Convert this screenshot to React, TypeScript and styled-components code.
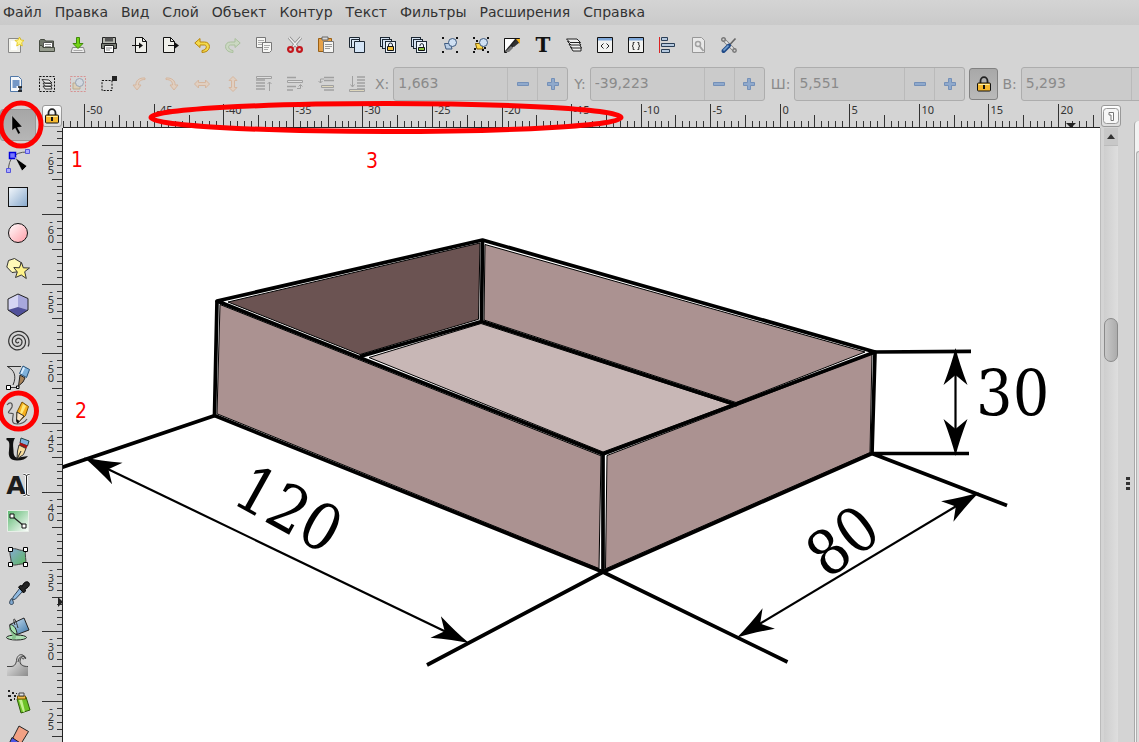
import React, { useLayoutEffect, useRef, useState } from "react";
import styled, { createGlobalStyle, css } from "styled-components";

const GlobalStyle = createGlobalStyle`
  * { box-sizing: border-box; }
  html, body, #root { height: 100%; }
  body {
    margin: 0;
    overflow: hidden;
    background: #d4d4d4;
    color: #333;
    font-family: "DejaVu Sans", sans-serif;
    font-size: 14px;
  }
  button, input { font: inherit; color: inherit; }
`;

const Window = styled.div`
  position: relative;
  display: flex;
  flex-direction: column;
  height: 100vh;
  overflow: hidden;
`;

const MenuBar = styled.nav`
  display: flex;
  flex: none;
  align-items: flex-start;
  gap: 13px;
  height: 25px;
  padding-left: 3px;
  background: linear-gradient(#d4d4d4, #cacaca);
`;

const MenuItem = styled.button`
  padding: 0;
  border: 0;
  background: none;
  line-height: 24px;
  white-space: nowrap;
`;

const Toolbar = styled.div<{ $height: number }>`
  display: flex;
  flex: none;
  align-items: center;
  height: ${(p) => p.$height}px;
  padding-left: 1px;
`;

const IconRow = styled.div`
  display: flex;
  flex: none;
  gap: 1px;
`;

const IconButton = styled.button<{ $faded?: boolean }>`
  display: grid;
  place-items: center;
  width: 30px;
  height: 32px;
  padding: 0;
  border: 0;
  background: none;
  opacity: ${(p) => (p.$faded ? 0.4 : 1)};
`;

const Field = styled.label`
  display: flex;
  flex: none;
  align-items: center;
  gap: 4px;
  margin-left: 6px;
  color: #8a8a8a;

  &:first-of-type { margin-left: 3px; }
  &:last-of-type { margin-left: 4px; }
`;

const SpinBox = styled.span<{ $width: number }>`
  display: flex;
  width: ${(p) => p.$width}px;
  height: 34px;
  border: 1px solid #adadad;
  border-radius: 3px;
  background: #cbcbcb;
  overflow: hidden;
`;

const SpinInput = styled.input`
  flex: 1;
  min-width: 0;
  padding: 0 4px 2px;
  border: 0;
  background: none;
  outline: none;
`;

const SpinButton = styled.button`
  display: grid;
  place-items: center;
  width: 30px;
  padding: 0;
  border: 0;
  border-left: 1px solid #bababa;
  background: none;
`;

const LockToggle = styled.button`
  display: grid;
  flex: none;
  place-items: center;
  width: 29px;
  height: 32px;
  margin-left: 4px;
  padding: 0;
  border: 1px solid #828282;
  border-radius: 3px;
  background: linear-gradient(#a8a8a8, #bababa);
`;

const Workspace = styled.main`
  display: flex;
  flex: 1;
  min-height: 0;
`;

const ToolBox = styled.div`
  display: flex;
  flex: none;
  flex-direction: column;
  width: 41px;
  padding-top: 4px;
  overflow: hidden;
`;

const ToolButton = styled.button<{ $active?: boolean }>`
  display: grid;
  flex: none;
  place-items: center;
  width: 36px;
  height: 36px;
  padding: 0;
  border: 0;
  background: none;

  ${(p) =>
    p.$active &&
    css`
      height: 32px;
      margin: 2px 0;
      border: 1px solid #999;
      border-radius: 3px;
      background: linear-gradient(#a6a6a6, #b6b6b6);
    `}
`;

const DrawingArea = styled.div`
  display: grid;
  flex: 1;
  grid-template-columns: 22px minmax(0, 1fr) 20px;
  grid-template-rows: 25px minmax(0, 1fr);
  min-width: 0;
`;

const CornerButton = styled.button`
  display: grid;
  place-items: center;
  width: 20px;
  height: 22px;
  margin: 2px 0 0 1px;
  padding: 0;
  border: 1px solid #999;
  border-radius: 3px;
  background: linear-gradient(#fff, #ddd);
`;

const RulerSvg = styled.svg`
  display: block;
  width: 100%;
  height: 100%;
  overflow: hidden;
  font-family: "Noto Sans", sans-serif;
  font-size: 11px;
  fill: #333;
`;

const Canvas = styled.svg`
  display: block;
  width: 100%;
  height: 100%;
  background: #fff;
`;

const ScrollColumn = styled.div`
  display: flex;
  flex-direction: column;
  padding-left: 3px;
  border-left: 1px solid #bbb;
`;

const ScrollArrow = styled.button`
  display: grid;
  flex: none;
  place-items: center;
  width: 14px;
  height: 18px;
  padding: 0;
  border: 0;
  border-bottom: 1px solid #bbb;
  background: #c8c8c8;
`;

const ScrollTrack = styled.div`
  flex: 1;
  width: 14px;
  padding-top: 172px;
  background: linear-gradient(90deg, #cecece, #dedede);
`;

const ScrollThumb = styled.div`
  height: 44px;
  border: 1px solid #8a8a8a;
  border-radius: 7px;
  background: linear-gradient(90deg, #c8c8c8, #acacac);
`;

const Splitter = styled.div`
  display: flex;
  flex: none;
  flex-direction: column;
  align-items: center;
  justify-content: center;
  gap: 2px;
  width: 14px;
  padding: 122px 0 0 2px;
`;

const GripDot = styled.span`
  width: 4px;
  height: 3px;
  background: #333;
`;

const DockPanel = styled.aside`
  flex: none;
  width: 5px;
  margin-top: 18px;
  padding: 30px 0 0 1px;
  border-left: 1px solid #a8a8a8;
  border-top-left-radius: 4px;
  background: #f2f2f2;
`;

const DockInner = styled.div`
  height: 100%;
  border-left: 1px solid #b0b0b0;
  border-top: 1px solid #b0b0b0;
  border-top-left-radius: 3px;
  background: #dcdcdc;
`;

const Annotations = styled.svg`
  position: absolute;
  inset: 0;
  width: 100%;
  height: 100%;
  pointer-events: none;
  font-family: "DejaVu Sans Condensed", "DejaVu Sans", sans-serif;
  font-size: 21px;
`;

/* ---------- icons, 16 unit grid ---------- */

const page = "M2.5.5h9l3 3v12h-12z";

const Lock = () => (
  <g>
    <path d="M4.5 7V5a3.5 3.8 0 0 1 7 0v2" fill="none" stroke="#222" strokeWidth="1.800" />
    <rect x="1.500" y="7" width="13" height="8" rx="1" fill="#f5b82e" stroke="#111" />
    <path d="M2.500 8.500h11" stroke="#fff0a0" />
    <path d="M8 9v4" stroke="#111" strokeWidth="2" />
  </g>
);

const Windows = ({ children }: { children?: React.ReactNode }) => (
  <g fill="#d5e3f2" stroke="#1c2733">
    <rect x=".5" y=".5" width="9" height="9" />
    <rect x="2.5" y="2.5" width="9" height="9" />
    <rect x="5.5" y="4.5" width="10" height="11" fill="#eef4fb" />
    {children}
  </g>
);

const Group = ({ lock }: { lock?: boolean }) => (
  <g>
    <path d="M2.500 6.500h6l1.500 5.500H4z" fill={lock ? "#ffd94a" : "#b9cde4"} stroke={lock ? "#7a5a00" : "#3d5a80"} />
    <circle cx="10.5" cy="5.5" r="4" fill="#cfe0f3" stroke="#3d5a80" />
    <path d="M0 0h2v2H0zM14 0h2v2h-2zM0 14h2v2H0zM14 14h2v2h-2z" fill="#111" />
    {lock && <path d="M3 3h2v2H3zM11 10h2v2h-2zM1 11h2v2H1zM9 12h2v2H9z" fill="#111" />}
  </g>
);

const commandIcons: [string, React.ReactNode, boolean?][] = [
  ["Создать", <g><path d="M.5 1.500h12v14h-12z" fill="#f2f2ec" stroke="#888" /><path d="M3 4h6v9H3z" fill="#fff" /><path d="M11.500 0l1.400 3 3.100.4-2.300 2.300.6 3.300-2.800-1.600-2.800 1.600.6-3.300L7 3.400l3.100-.4z" fill="#fff58a" stroke="#e0c010" strokeWidth=".8" /></g>],
  ["Открыть", <g><path d="M.5 3.500l1-1h4l1 1.500h8v10.500H.5z" fill="#70766a" stroke="#454a40" /><path d="M4.500 5.500h9v6h-9z" fill="#fff" stroke="#555" /><path d="M6 7.500h6M6 9.500h6" stroke="#999" /><path d="M.5 14.500V8.500H3l1 2h11.500v4z" fill="#969c8e" stroke="#454a40" /></g>],
  ["Сохранить", <g><path d="M2.500 10.500h11l1.500 5H1z" fill="#eee" stroke="#888" /><path d="M3.500 13.500h9" stroke="#aaa" /><path d="M6.500.5h3v6h3.500L8 11.500 3 6.500h3.500z" fill="#73d216" stroke="#3f8a08" /></g>],
  ["Печать", <g><path d="M1.500.5h13v7h-13z" fill="#b7bab2" stroke="#222" /><path d="M.5 6.500h15v5H.5z" fill="#787c74" stroke="#222" /><path d="M4 .5h8v4H4z" fill="#555" /><path d="M3.500 8.500h9v7h-9z" fill="#fff" stroke="#222" /><path d="M5 11h6M5 13h4" stroke="#888" /></g>],
  ["Импорт", <g><path d="M3.500.5h7l4 4v11h-11z" fill="#efefea" stroke="#111" /><path d="M10.500.5v4h4" fill="none" stroke="#111" /><path d="M0 8.500h8" stroke="#111" /><path d="M7 5.500l4 3-4 3z" fill="#111" /></g>],
  ["Экспорт", <g><path d="M.5.500h7l4 4v11H.5z" fill="#efefea" stroke="#111" /><path d="M7.500.5v4h4" fill="none" stroke="#111" /><path d="M5 8.500h8" stroke="#111" /><path d="M12 5.500l4 3-4 3z" fill="#111" /></g>],
  ["Отменить", <path d="M6 1.500L.8 6 6 10.500V8h4.500c2.500 0 2.500 4-.5 5l-2 .5v2l3-.5c6-1.500 6-10-.5-10H6z" fill="#f4d94b" stroke="#b8860b" />],
  ["Повторить", <path d="M10 1.500L15.200 6 10 10.500V8H5.500C3 8 3 12 6 13l2 .5v2L5 15C-1 13.500-1 5 5.500 5H10z" fill="#bfe0a8" stroke="#6ca34c" />, true],
  ["Копировать", <g fill="#f6f6f4" stroke="#777"><path d="M.5.500h9v10h-9z" /><path d="M2 3.500h6M2 5.500h5M2 7.500h4" stroke="#aaa" /><path d="M6.500 5.500h9v8l-2 2h-7z" /><path d="M8 8.500h6M8 10.500h5M8 12.500h4" stroke="#aaa" /></g>],
  ["Вырезать", <g><path d="M2 .5L10.500 10M14 .5L5.500 10" stroke="#888" strokeWidth="3" /><path d="M2 .5L10.500 10M14 .5L5.500 10" stroke="#eee" strokeWidth="1.500" /><g fill="none" stroke="#c4161c" strokeWidth="2.200"><ellipse cx="3.500" cy="12.500" rx="2.400" ry="2.300" /><ellipse cx="12.500" cy="12.500" rx="2.400" ry="2.300" /></g></g>],
  ["Вставить", <g><path d="M.5 1.500h13v13H.5z" fill="#e6a24a" stroke="#9a6015" /><path d="M4 0h6v3H4z" fill="#d8d8d8" stroke="#666" /><path d="M5.500 4.500h10v11h-10z" fill="#f5f5f3" stroke="#777" /><path d="M7 7.500h7M7 9.500h7M7 11.500h5" stroke="#999" /></g>],
  ["Дублировать", <g><path d="M.5.500h10v10H.5z" fill="#dbe8f5" stroke="#1c2733" /><path d="M2.500 2.500h8v8h-8z" fill="#dbe8f5" stroke="#1c2733" /><path d="M5.500 4.500h10v11h-10z" fill="#d5e5f6" stroke="#1c2733" /></g>],
  ["Создать клон", <Windows><path d="M8.500 9V8a2 2 0 0 1 4 0v1" fill="none" /><path d="M7.500 9.500h6v4h-6z" fill="#f5c23a" stroke="#111" /></Windows>],
  ["Отсоединить клон", <Windows><path d="M9 9V8a1.800 1.800 0 0 1 3.500 0v2" fill="none" /><path d="M7.500 10.500h6v3h-6z" fill="#8dc63f" stroke="#111" /></Windows>],
  ["Сгруппировать", <Group />],
  ["Разгруппировать", <Group lock />],
  ["Заливка и обводка", <g><path d="M.5 1.500h15v2l-13 12h-2z" fill="#222" stroke="#111" /><path d="M1 14V2h10z" fill="#fff" /><path d="M1 15L7 9l2 2-4 4z" fill="#777" /><path d="M8 8l5-6 3 3-6 5z" fill="#333" /><path d="M12 2h4v5z" fill="#f5b21a" /></g>],
  ["Текст и шрифт", <text x="8" y="15" textAnchor="middle" fontFamily="DejaVu Serif, serif" fontWeight="bold" fontSize="20" fill="#111">T</text>],
  ["Слои", <g fill="#f0f0f0" stroke="#222" strokeLinejoin="round"><path d="M4.500 10h10.500v4H7z" /><path d="M3 7.500h10.500l2 3.500H6z" /><path d="M1.500 4.500h10.500l3 3.500H5z" /><path d="M.5 2h10.500l3.500 3.500H4z" /></g>],
  ["Редактор XML", <g><path d="M.5.500h15v15H.5z" fill="#f2f2f0" stroke="#111" /><path d="M1 1h14v2.500H1z" fill="#7da7d9" /><path d="M6.500 6.500L4 9l2.500 2.500M9.500 6.500L12 9l-2.500 2.500" fill="none" stroke="#222" /></g>],
  ["Селекторы и CSS", <g><path d="M.5.500h15v15H.5z" fill="#f2f2f0" stroke="#111" /><path d="M1 1h14v2.500H1z" fill="#7da7d9" /><path d="M6.500 5.500H5.200v2.500l-1 1 1 1v2.500h1.300M9.500 5.500h1.300v2.500l1 1-1 1v2.500H9.500" fill="none" stroke="#222" /></g>],
  ["Выровнять и расставить", <g><path d="M.5 0v16" stroke="#d22" /><g fill="#b5c9df" stroke="#2a3f57"><path d="M2.500.5h6v3h-6zM2.500 6.500h13v3h-13zM2.500 12.500h8v3h-8z" /></g></g>],
  ["Параметры документа", <g opacity=".65"><path d={page} fill="#f4f4f4" stroke="#777" /><circle cx="8" cy="7" r="2.500" fill="none" stroke="#888" strokeWidth="1.500" /><path d="M9.500 9l4 5" stroke="#888" strokeWidth="2" /></g>],
  ["Настройки", <g><path d="M3 3l10 10" stroke="#777" strokeWidth="3.200" /><path d="M3 3l10 10" stroke="#e6e6e6" strokeWidth="1.800" /><circle cx="2.500" cy="2.500" r="1.800" fill="none" stroke="#777" strokeWidth="1.400" /><circle cx="13.500" cy="13.500" r="1.700" fill="none" stroke="#777" strokeWidth="1.400" /><path d="M14.500 1.500L8 8.500" stroke="#666" strokeWidth="1.700" /><path d="M8 8.500L2.500 14" stroke="#204a87" strokeWidth="4" strokeLinecap="round" /><path d="M7.500 8.500L2.500 13.500" stroke="#729fcf" strokeWidth="1.700" /></g>],
];

const dashBox = <path d="M.5.500h15v15H.5z" fill="none" stroke="#111" strokeDasharray="2 1.300" />;
const lines = (x: number, w: number) => (
  <path d={`M${x} 4h${w}M${x} 7h${w}M${x} 10h${w}M${x} 13h${w}`} stroke="#555" strokeWidth="1.500" />
);

const optionIcons: [string, React.ReactNode, boolean?][] = [
  ["Выделить всё", <g><path d="M2.500.5h8l3 3v12h-11z" fill="#f5f7fa" stroke="#5078a8" /><path d="M4.500 5h7M4.500 7h7M4.500 9h7M4.500 11h4" stroke="#4a78b5" strokeWidth="1.300" /><path d="M10 11h4M10 15h4M12 11v4" stroke="#111" strokeWidth="1.300" /></g>],
  ["Выделить всё во всех слоях", <g>{dashBox}<g fill="#eee" stroke="#222" strokeWidth=".9"><path d="M4 10l8 .5 1 2.500H6z" /><path d="M4 7l8 .5 1 2.500H6z" /><path d="M3 3.500l7 .5 3 3H6z" /></g></g>],
  ["Снять выделение", <g><path d="M.5.500h15v15H.5z" fill="none" stroke="#d33" strokeDasharray="2 1.300" /><path d="M3 7h7v6H3z" fill="#e8c98a" stroke="#94702d" /><circle cx="9.500" cy="6.500" r="4" fill="#cfe0f3" stroke="#3d5a80" /></g>, true],
  ["Показать сигнал рамки", <g><path d="M1 4.500h10v10H1z" fill="none" stroke="#111" strokeDasharray="2 1.300" /><path d="M11 0h5v5h-5z" fill="#222" /></g>],
  ["Повернуть против часовой", <path d="M13 2C7 1.500 3.500 5 4 9H1l4 5 4-5H6.500C6.500 6 8 3.500 13 3.500z" fill="#f3c9a5" stroke="#d98b50" />, true],
  ["Повернуть по часовой", <path d="M3 2c6-.5 9.500 3 9 7h3l-4 5-4-5h2.500C9.500 6 8 3.500 3 3.500z" fill="#f3c9a5" stroke="#d98b50" />, true],
  ["Отразить горизонтально", <path d="M.5 8l4-4v2.500h7V4l4 4-4 4V9.500h-7V12z" fill="#f3c9a5" stroke="#d98b50" />, true],
  ["Отразить вертикально", <path d="M8 .5l4 4H9.500v7H12l-4 4-4-4h2.500v-7H4z" fill="#f3c9a5" stroke="#d98b50" />, true],
  ["Поднять на передний план", <g><path d="M.5.500h15v2H.5z" fill="#eee" stroke="#555" />{lines(0, 9)}<path d="M13.500 15V6M11.500 8l2-2 2 2" fill="none" stroke="#555" /></g>, true],
  ["Поднять", <g><path d="M0 1.500h9M0 10.500h9M0 14h6" stroke="#555" strokeWidth="1.500" /><path d="M.5 4.500h15v2H.5z" fill="#eee" stroke="#555" /><path d="M10 12.500h3.500V9M11.500 10.500l2-2 2 2" fill="none" stroke="#555" /></g>, true],
  ["Опустить", <g><path d="M6 1.500h10M6 4.500h10M6 14h10" stroke="#555" strokeWidth="1.500" /><path d="M3.500 9.500h12v2h-12z" fill="#eedc9a" stroke="#555" /><path d="M6 3H2.500v4M.5 5l2 2 2-2" fill="none" stroke="#555" /></g>, true],
  ["Опустить на задний план", <g>{lines(8, 8)}<path d="M8 1h8" stroke="#555" strokeWidth="1.500" /><path d="M.5 13.500h15v2H.5z" fill="#eedc9a" stroke="#555" /><path d="M3.500 0v11M1.500 8.500l2 2.500 2-2.500" fill="none" stroke="#555" /></g>, true],
];

/* ---------- tool box icons, 24 unit grid ---------- */

const spiral = Array.from({ length: 100 }, (_, i) => {
  const a = i * 0.19;
  const r = 0.7 + i * 0.107;
  return `${(12 + r * Math.cos(a + 0.5)).toFixed(1)} ${(12.5 + r * Math.sin(a + 0.5)).toFixed(1)}`;
});

const tools: [string, React.ReactNode][] = [
  ["Выделение", <path d="M6 2.500v15l3.200-2.300 3 6 2.300-1.200-3-5.500 4.700-.7z" fill="#000" stroke="#ddd" strokeWidth=".4" />],
  ["Узлы", <g><path d="M2.500 21C2.500 10 8 3 21 3" fill="none" stroke="#555" /><path d="M.5 19.500h4v4h-4zM19.500.500h4v4h-4z" fill="#aaf" stroke="#55d" /><path d="M3.500 3.500h6v6h-6z" fill="#77f" stroke="#00d" strokeWidth="1.500" /><path d="M9 8.500l12 8.500-5 5z" fill="#000" stroke="#eee" strokeWidth=".6" /></g>],
  ["Прямоугольник", <rect x="2.500" y="2.500" width="19" height="19" fill="url(#blueFill)" stroke="#111" />],
  ["Эллипс", <circle cx="12" cy="12" r="9.500" fill="url(#pinkFill)" stroke="#111" />],
  ["Звезда", <g fill="#fff9b8" stroke="#333" strokeLinejoin="round"><path d="M8.500 1.500L15 5.500l-1 9-8 1L.8 10 2.500 3.500z" /><path d="M15.500 5.500l1.800 5.300 6.200.2-4.800 3.700 1.600 6.800-5-3.500-5.800 2.500 1.800-5.500-3.500-4.500 5.500.3z" fill="#fff38a" /></g>],
  ["Параллелепипед", <g strokeLinejoin="round"><path d="M2 6L12 1v13L2 17z" fill="#d6d6f4" /><path d="M12 1l10 4.500V17l-10-3z" fill="#a8a8dc" /><path d="M12 14l10 3-10 6.500L2 17z" fill="#50509a" /><path d="M2 6L12 1l10 4.500V17L12 23.500 2 17z" fill="none" stroke="#222" /></g>],
  ["Спираль", <polyline points={spiral.join(" ")} fill="none" stroke="#333" strokeWidth="1.200" />],
  ["Кривые Безье", <g><path d="M1 1.500h14M2 2c6 3 9 9 5 18" fill="none" stroke="#333" /><path d="M4 22.500h8" stroke="#333" /><path d="M.5 20.500h4v4h-4z" fill="#fff" stroke="#000" /><path d="M10.500 21h2.500v2.500h-2.500z" fill="#fff" stroke="#000" /><path d="M17 1l6.500 3.500-3 8-7-4z" fill="#7fb2dc" stroke="#25527a" /><path d="M17 2l2 1-3 6-1.500-.5z" fill="#dbeeff" /><path d="M14 10l5 3-2 4-4.500 4z" fill="#a9845a" stroke="#222" /></g>],
  ["Карандаш", <g><path d="M1 4c3-4 6-2 5 2-1 3-5 5-3 6 3 1 5-1 4 3-1 5-1 8 4 8 6 0 8-2 10-5" fill="none" stroke="#555" strokeWidth="1.200" /><path d="M16 1l6.500 4.500-3 9-7 6.500-2-1 .5-9z" fill="#f6b01e" stroke="#7a5200" /><path d="M17 3l3 2-4 8-2-1z" fill="#ffe878" /><path d="M11 11l7 4-6 7-1.500-2z" fill="#f8e4c4" stroke="#333" /><path d="M10.500 18l3 2-2.500 3z" fill="#111" /></g>],
  ["Каллиграфия", <g><path d="M.5 1H9C6 6 7.500 10 7.500 14c0 5 2 7 5 6.500L22 19c-2 3-6 4.500-11 4.500-7 0-9-4-8-10C3.500 8 4 4 .5 3z" fill="#111" /><path d="M15 1l8 3-1.500 5-7.500-3z" fill="#7fb2dc" stroke="#244" /><path d="M14 5.500l7.500 3-1 3-7.500-3z" fill="#a11" /><path d="M13 8l7 3.500-2.500 6-6.500 4.500.5-8z" fill="#f7dc9c" stroke="#333" /><path d="M11 22l4-8" stroke="#222" /></g>],
  ["Текст", <g><text x="10" y="21" textAnchor="middle" fontFamily="DejaVu Sans, sans-serif" fontWeight="bold" fontSize="25" fill="#1c1c1c">A</text><path d="M17.500 1.500c2 0 3 .5 3 2v17c0 1.500-1 2-3 2M23.500 1.500c-2 0-3 .5-3 2v17c0 1.500 1 2 3 2" fill="none" stroke="#fff" strokeWidth="2.500" /><path d="M17.500 1.500c2 0 3 .5 3 2v17c0 1.500-1 2-3 2M23.500 1.500c-2 0-3 .5-3 2v17c0 1.500 1 2 3 2" fill="none" stroke="#222" /></g>],
  ["Градиент", <g><path d="M1.500 1.500h21v21h-21z" fill="url(#greenFill)" stroke="#e8efe8" /><path d="M6 7l12 10" stroke="#222" strokeWidth="1.200" /><path d="M4 5h4v4H4zM16 15h4v4h-4z" fill="#fff" stroke="#111" /></g>],
  ["Сетка градиентов", <g><path d="M4.500 4.500c6-3 9 3 15.500 0-2 6 1 10-.5 15-5-2-9 2-15 0 2-5-2-10 0-15z" fill="url(#meshFill)" stroke="#444" /><path d="M2.500 2.500h4v4h-4zM17.500 2.500h4v4h-4zM2.500 17.500h4v4h-4zM17.500 17.500h4v4h-4z" fill="#fff" stroke="#000" /></g>],
  ["Пипетка", <g><path d="M14 7l3 3-7.500 8-3 1 .5-3z" fill="#8fb9e0" stroke="#345" /><path d="M12.500 6l2-1.500 2 .5C17 2 20 0 22 1s2 4-1 6l-2 1 .5 2-2 2z" fill="#222" stroke="#000" /><path d="M5.500 17.500c3 4 2 6 0 6s-3-2 0-6z" fill="#7fa8d0" stroke="#345" /></g>],
  ["Заливка", <g><ellipse cx="10.500" cy="20.500" rx="10" ry="2.500" fill="#aee0b4" stroke="#222" /><path d="M4 11l4 7c1 2 1 3-2 3" fill="none" stroke="#87c48e" strokeWidth="3" /><path d="M4 7.500L18 1l5 12-12 4.500C7 16 4 12 4 7.500z" fill="url(#bucketFill)" stroke="#222" /><path d="M4 7.500c4 0 7 5 7 10-4-1-8-5-7-10z" fill="#a6e2ae" stroke="#222" /><path d="M9 8c-3-8 0-9 3 3" fill="none" stroke="#333" /></g>],
  ["Корректор", <g><path d="M1 13.500h4c3 0 5-2 5.500-6C11 2 17 0 19 4c0 2-2 2-2.500 1-1.500 0-2.500 3-.5 5.500 2 3 3 3 6 3V23H1z" fill="url(#greyFill)" /><path d="M1 13.500h4c3 0 5-2 5.500-6C11 1 17 0 18.500 4c.5 2-2 2.500-2.500 1M22 13.500c-4 0-8-1-8-5 0-4 3-6 4.500-4.500M12 9c1-8 9-7 7.500-3" fill="none" stroke="#444" /></g>],
  ["Распылитель", <g><path d="M11 10l9-2 4 13-9 3z" fill="#6cc227" stroke="#2d5c08" /><path d="M13 11l3-.5 3 12-2 .5z" fill="#c2f08c" /><path d="M11.500 7h8v3h-8z" fill="#f1c04a" stroke="#7a5200" /><path d="M13 4h5v3h-5z" fill="#ddd" stroke="#444" /><path d="M2 1h2v2H2zM6 3h2v2H6zM2 6h3v2H2zM8 6h2v2H8zM4 10h2v2H4zM8 9h1v2H8zM10 4h1v1h-1z" fill="#222" /></g>],
  ["Ластик", <g stroke="#222"><path d="M13 1l9.500 5.500-11 18H1z" fill="#f2a184" /><path d="M6 12.500l9 6-5 7H0z" fill="#4a55e8" /></g>],
];

/* ---------- rulers ---------- */

const MAJOR_STEP = 69.55;

/** Visible ruler marks: ten divisions per labelled step, the fifth one longer. */
const marks = (origin: number, length: number) => {
  const first = Math.ceil((-origin * 10) / MAJOR_STEP);
  const last = Math.floor(((length - origin) * 10) / MAJOR_STEP);
  return Array.from({ length: Math.max(0, last - first + 1) }, (_, i) => ({
    n: first + i,
    at: Math.floor(origin + ((first + i) * MAJOR_STEP) / 10) + 0.5,
  }));
};

const tickLength = (n: number) => (n % 10 === 0 ? 23 : n % 5 === 0 ? 12 : 6);

function useSize() {
  const ref = useRef<SVGSVGElement>(null);
  const [size, setSize] = useState({ width: 0, height: 0 });
  useLayoutEffect(() => {
    const node = ref.current!;
    const measure = () => {
      const box = node.getBoundingClientRect();
      setSize({ width: box.width, height: box.height });
    };
    measure();
    const observer = new ResizeObserver(measure);
    observer.observe(node);
    return () => observer.disconnect();
  }, []);
  return { ref, ...size };
}

const HorizontalRuler = () => {
  const { ref, width } = useSize();
  return (
    <RulerSvg ref={ref}>
      {marks(717.2, width).map(({ n, at }) => (
        <g key={n}>
          <path d={`M${at} 25v-${tickLength(n) + 1}`} stroke="#333" />
          {n % 10 === 0 && at + 20 < width && <text x={at + 2} y="11">{n / 2}</text>}
        </g>
      ))}
      <path d={`M0 24.500H${width}`} stroke="#222" />
      <path d="M1003 20h10l-5 5z" fill="#222" />
    </RulerSvg>
  );
};

const VerticalRuler = () => {
  const { ref, height } = useSize();
  return (
    <RulerSvg ref={ref}>
      {marks(17, height).map(({ n, at }) => (
        <g key={n}>
          <path d={`M22 ${at}h-${n % 10 === 0 ? 21 : n % 5 === 0 ? 11 : 6}`} stroke="#333" />
          {n % 10 === 0 && at + 30 < height && (
            <text textAnchor="middle">
              {String(n / 2 - 65).split("").map((c, i) => (
                <tspan key={i} x="10" y={at + [10, 19, 28][i]}>{c}</tspan>
              ))}
            </text>
          )}
        </g>
      ))}
      <path d={`M21.500 0V${height}`} stroke="#222" />
      <path d="M17 469l5 5-5 5z" fill="#222" />
    </RulerSvg>
  );
};

/* ---------- the drawing ---------- */

const arrowHead = "M0 0Q-16 -4 -37 -12L-27 0L-37 12Q-16 4 0 0z";

const Dimension = ({ from, to }: { from: [number, number]; to: [number, number] }) => {
  const angle = (Math.atan2(to[1] - from[1], to[0] - from[0]) * 180) / Math.PI;
  const length = Math.hypot(to[0] - from[0], to[1] - from[1]);
  return (
    <g transform={`translate(${from[0]} ${from[1]}) rotate(${angle})`}>
      <path d={`M20 0H${length - 20}`} stroke="#000" strokeWidth="2.200" />
      <path d={arrowHead} transform={`translate(${length} 0)`} />
      <path d={arrowHead} transform="rotate(180)" />
    </g>
  );
};

const BoxDrawing = () => (
  <Canvas role="img" aria-label="Коробка 120 × 80 × 30">
    <g transform="translate(-63 -128)">
      <g stroke="#000" strokeWidth="1">
        <path d="M228 302L480 243 478.500 319.300 360 354.500z" fill="#6b5352" />
        <path d="M485 244.500L865 352 736 402.500 484 320z" fill="#ab9291" />
        <path d="M369 357.500L481 323.500 731 404.500 603 452z" fill="#c8b7b6" />
        <path d="M220 304.500L601 455.800 599 568.500 217 413.800z" fill="#ab9291" />
        <path d="M607 455.500L872 353.800 870 452.500 605.500 568.800z" fill="#ab9291" />
      </g>
      <g fill="none" stroke="#000" strokeWidth="3.700" strokeLinejoin="round">
        <path d="M217 301L482.500 240 875 352 603 454z" />
        <path d="M217 301L214.500 415.500 603 572 872 453.500 875 352" />
        <path d="M603 454V572M482.500 240L481.500 321.500M360 356.500L481.500 321.500 737 405" />
        <path d="M215 415.500L60 468M603 572L427 665M603 572L787.500 662M872 453.500L1007 505.500M872 453.500H969M875 352L971 351.300" />
      </g>
      <Dimension from={[84, 457.500]} to={[469, 643]} />
      <Dimension from={[737, 637.500]} to={[979, 492.500]} />
      <Dimension from={[955.500, 348]} to={[955.500, 456]} />
      <g fontFamily="DejaVu Serif Condensed, DejaVu Serif, serif" fontSize="64">
        <text x="976" y="416">30</text>
        <text transform="translate(230 502) rotate(29)">120</text>
        <text transform="translate(828 580) rotate(-38)" fontSize="62">80</text>
      </g>
    </g>
  </Canvas>
);

const gradients: [string, string, string][] = [
  ["blueFill", "#f4f8fc", "#86a8cc"],
  ["pinkFill", "#ffffff", "#ff9ca6"],
  ["greenFill", "#5cb870", "#ffffff"],
  ["meshFill", "#86a9d6", "#5cb85c"],
  ["bucketFill", "#d5e9f7", "#3a74a8"],
  ["greyFill", "#f4f4f4", "#8c8c8c"],
];

const GradientDefs = styled.svg`
  position: absolute;
  width: 0;
  height: 0;
`;

const Icon = ({ size = 16, children }: { size?: number; children: React.ReactNode }) => (
  <svg width={size} height={size} viewBox={`0 0 ${size} ${size}`} overflow="visible" aria-hidden="true">
    {children}
  </svg>
);

const Sign = ({ plus }: { plus?: boolean }) => {
  const d = plus ? "M6.500 2.500h3v4h4v3h-4v4h-3v-4h-4v-3h4z" : "M2.500 6.500h11v3h-11z";
  return <Icon><path d={d} fill="#8fa9cc" stroke="#7490b8" strokeLinejoin="round" /></Icon>;
};

const Spin = ({ label, value, width }: { label: string; value: string; width: number }) => (
  <Field>
    {label}
    <SpinBox $width={width}>
      <SpinInput defaultValue={value} />
      <SpinButton aria-label="Уменьшить"><Sign /></SpinButton>
      <SpinButton aria-label="Увеличить"><Sign plus /></SpinButton>
    </SpinBox>
  </Field>
);

const IconButtons = ({ items }: { items: [string, React.ReactNode, boolean?][] }) => (
  <IconRow>
    {items.map(([name, art, faded]) => (
      <IconButton key={name} aria-label={name} $faded={faded}>
        <Icon>{art}</Icon>
      </IconButton>
    ))}
  </IconRow>
);

const menu = ["Файл", "Правка", "Вид", "Слой", "Объект", "Контур", "Текст", "Фильтры", "Расширения", "Справка"];

export default function App() {
  return (
    <Window>
      <GlobalStyle />
      <GradientDefs aria-hidden="true">
        <defs>
          {gradients.map(([id, a, b]) => (
            <linearGradient key={id} id={id} x1="0" y1="0" x2="1" y2="1">
              <stop offset="0" stopColor={a} />
              <stop offset="1" stopColor={b} />
            </linearGradient>
          ))}
        </defs>
      </GradientDefs>

      <MenuBar>
        {menu.map((name) => <MenuItem key={name}>{name}</MenuItem>)}
      </MenuBar>

      <Toolbar $height={40}>
        <IconButtons items={commandIcons} />
      </Toolbar>

      <Toolbar $height={38}>
        <IconButtons items={optionIcons} />
        <Spin label="X:" value="1,663" width={175} />
        <Spin label="Y:" value="-39,223" width={175} />
        <Spin label="Ш:" value="5,551" width={171} />
        <LockToggle aria-label="Сохранять пропорции" aria-pressed="true"><Icon><Lock /></Icon></LockToggle>
        <Spin label="В:" value="5,293" width={171} />
      </Toolbar>

      <Workspace>
        <ToolBox>
          {tools.map(([name, art], i) => (
            <ToolButton key={name} aria-label={name} $active={i === 0}>
              <Icon size={24}>{art}</Icon>
            </ToolButton>
          ))}
        </ToolBox>
        <DrawingArea>
          <CornerButton aria-label="Заблокировать направляющие"><Icon><Lock /></Icon></CornerButton>
          <HorizontalRuler />
          <CornerButton aria-label="Масштаб при изменении окна">
            <Icon>
              <rect x=".5" y=".5" width="15" height="15" rx="3" fill="#f7f7f7" stroke="#999" />
              <path d="M6 4.500h4.500v8h-2.500V7H6z" fill="#fff" stroke="#777" />
            </Icon>
          </CornerButton>
          <VerticalRuler />
          <BoxDrawing />
          <ScrollColumn>
            <ScrollArrow aria-label="Вверх">
              <svg width="8" height="5" viewBox="0 0 8 5"><path d="M0 5l4-5 4 5z" fill="#333" /></svg>
            </ScrollArrow>
            <ScrollTrack><ScrollThumb /></ScrollTrack>
          </ScrollColumn>
        </DrawingArea>
        <Splitter><GripDot /><GripDot /><GripDot /></Splitter>
        <DockPanel><DockInner /></DockPanel>
      </Workspace>

      <Annotations>
        <g fill="none" stroke="#f00" strokeWidth="5">
          <ellipse cx="21" cy="124.500" rx="20" ry="21.500" />
          <circle cx="18.500" cy="411" r="18" />
          <ellipse cx="386" cy="117.500" rx="235" ry="14" />
        </g>
        <g fill="#f00">
          <text x="71" y="167">1</text>
          <text x="75" y="418">2</text>
          <text x="366" y="168">3</text>
        </g>
      </Annotations>
    </Window>
  );
}
